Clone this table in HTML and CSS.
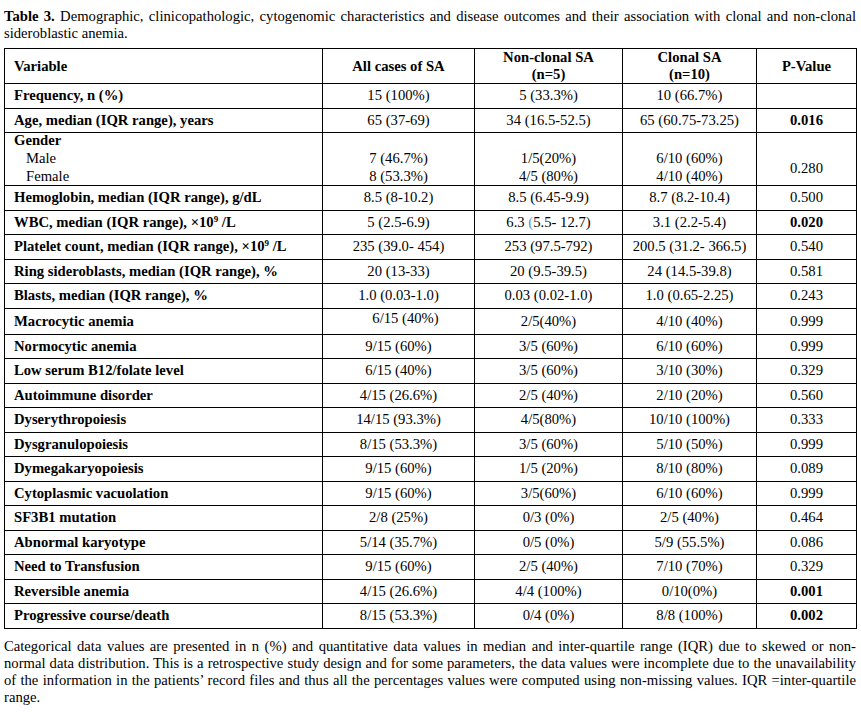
FILE: index.html
```html
<!DOCTYPE html>
<html>
<head>
<meta charset="utf-8">
<link rel="stylesheet" href="styles.css">
</head>
<body>
<div class="page">
  <p class="caption"><b>Table 3.</b> Demographic, clinicopathologic, cytogenomic characteristics and disease outcomes and their association with clonal and non-clonal sideroblastic anemia.</p>
  <table class="data">
    <colgroup>
      <col class="c1"><col class="c2"><col class="c3"><col class="c4"><col class="c5">
    </colgroup>
    <thead>
      <tr>
        <th class="left">Variable</th>
        <th>All cases of SA</th>
        <th>Non-clonal SA<br>(n=5)</th>
        <th>Clonal SA<br>(n=10)</th>
        <th>P-Value</th>
      </tr>
    </thead>
    <tbody>
      <tr><td class="var">Frequency, n (%)</td><td>15 (100%)</td><td>5 (33.3%)</td><td>10 (66.7%)</td><td></td></tr>
      <tr><td class="var">Age, median (IQR range), years</td><td>65 (37-69)</td><td>34 (16.5-52.5)</td><td>65 (60.75-73.25)</td><td class="sig">0.016</td></tr>
      <tr class="gender">
        <td class="var"><div class="stack">Gender<br><span class="sub">Male</span><br><span class="sub">Female</span></div></td>
        <td><div class="stack">&nbsp;<br>7 (46.7%)<br>8 (53.3%)</div></td>
        <td><div class="stack">&nbsp;<br>1/5(20%)<br>4/5 (80%)</div></td>
        <td><div class="stack">&nbsp;<br>6/10 (60%)<br>4/10 (40%)</div></td>
        <td class="low">0.280</td>
      </tr>
      <tr><td class="var">Hemoglobin, median (IQR range), g/dL</td><td>8.5 (8-10.2)</td><td>8.5 (6.45-9.9)</td><td>8.7 (8.2-10.4)</td><td>0.500</td></tr>
      <tr><td class="var">WBC, median (IQR range), ×10<sup>9</sup> /L</td><td>5 (2.5-6.9)</td><td>6.3 <span class="blue">(</span>5.5- 12.7)</td><td>3.1 (2.2-5.4)</td><td class="sig">0.020</td></tr>
      <tr><td class="var">Platelet count, median (IQR range), ×10<sup>9</sup> /L</td><td>235 (39.0- 454)</td><td>253 (97.5-792)</td><td>200.5 (31.2- 366.5)</td><td>0.540</td></tr>
      <tr><td class="var">Ring sideroblasts, median (IQR range), %</td><td>20 (13-33)</td><td>20 (9.5-39.5)</td><td>24 (14.5-39.8)</td><td>0.581</td></tr>
      <tr><td class="var">Blasts, median (IQR range), %</td><td>1.0 (0.03-1.0)</td><td>0.03 (0.02-1.0)</td><td>1.0 (0.65-2.25)</td><td>0.243</td></tr>
      <tr class="macro"><td class="var">Macrocytic anemia</td><td class="shift">6/15 (40%)</td><td>2/5(40%)</td><td>4/10 (40%)</td><td>0.999</td></tr>
      <tr><td class="var">Normocytic anemia</td><td>9/15 (60%)</td><td>3/5 (60%)</td><td>6/10 (60%)</td><td>0.999</td></tr>
      <tr><td class="var">Low serum B12/folate level</td><td>6/15 (40%)</td><td>3/5 (60%)</td><td>3/10 (30%)</td><td>0.329</td></tr>
      <tr><td class="var">Autoimmune disorder</td><td>4/15 (26.6%)</td><td>2/5 (40%)</td><td>2/10 (20%)</td><td>0.560</td></tr>
      <tr><td class="var">Dyserythropoiesis</td><td>14/15 (93.3%)</td><td>4/5(80%)</td><td>10/10 (100%)</td><td>0.333</td></tr>
      <tr><td class="var">Dysgranulopoiesis</td><td>8/15 (53.3%)</td><td>3/5 (60%)</td><td>5/10 (50%)</td><td>0.999</td></tr>
      <tr><td class="var">Dymegakaryopoiesis</td><td>9/15 (60%)</td><td>1/5 (20%)</td><td>8/10 (80%)</td><td>0.089</td></tr>
      <tr><td class="var">Cytoplasmic vacuolation</td><td>9/15 (60%)</td><td>3/5(60%)</td><td>6/10 (60%)</td><td>0.999</td></tr>
      <tr><td class="var">SF3B1 mutation</td><td>2/8 (25%)</td><td>0/3 (0%)</td><td>2/5 (40%)</td><td>0.464</td></tr>
      <tr><td class="var">Abnormal karyotype</td><td>5/14 (35.7%)</td><td>0/5 (0%)</td><td>5/9 (55.5%)</td><td>0.086</td></tr>
      <tr><td class="var">Need to Transfusion</td><td>9/15 (60%)</td><td>2/5 (40%)</td><td>7/10 (70%)</td><td>0.329</td></tr>
      <tr><td class="var">Reversible anemia</td><td>4/15 (26.6%)</td><td>4/4 (100%)</td><td>0/10(0%)</td><td class="sig">0.001</td></tr>
      <tr><td class="var">Progressive course/death</td><td>8/15 (53.3%)</td><td>0/4 (0%)</td><td>8/8 (100%)</td><td class="sig">0.002</td></tr>
    </tbody>
  </table>
  <p class="note">Categorical data values are presented in n (%) and quantitative data values in median and inter-quartile range (IQR) due to skewed or non-normal data distribution. This is a retrospective study design and for some parameters, the data values were incomplete due to the unavailability of the information in the patients’ record files and thus all the percentages values were computed using non-missing values. IQR =inter-quartile range.</p>
</div>
</body>
</html>
```
FILE: styles.css
```css
html, body {
  margin: 0;
  padding: 0;
  background: #ffffff;
}
.page {
  padding: 8px 5px 0 4px;
  font-family: "Liberation Serif", "Times New Roman", serif;
  font-size: 14.67px;
  line-height: 17px;
  color: #000;
}
.caption {
  margin: 0 0 6px 0;
  text-align: justify;
}
.data {
  border-collapse: collapse;
  width: 852px;
  table-layout: fixed;
}
.c1 { width: 318px; }
.c2 { width: 152px; }
.c3 { width: 148px; }
.c4 { width: 134px; }
.c5 { width: 100px; }
.data th, .data td {
  border: 1px solid #000;
  text-align: center;
  vertical-align: middle;
  padding: 3.25px 9px;
  white-space: nowrap;
}
.data th {
  padding-top: 0;
  padding-bottom: 0;
  font-weight: bold;
}
.data th.left, .data td.var {
  text-align: left;
}
.data td.var {
  font-weight: bold;
}
.data td.sig {
  font-weight: bold;
}
.sub {
  font-weight: normal;
  padding-left: 12px;
}
.gender td {
  line-height: 18px;
  padding-top: 0;
  padding-bottom: 0;
}
.stack {
  margin: -2px 0 0 0;
}
.gender td.low {
  padding-top: 18px;
}
.macro td {
  padding-top: 4px;
  padding-bottom: 4px;
}
.macro td.shift {
  padding-left: 23px;
  padding-bottom: 6px;
  padding-top: 0;
}
sup {
  font-size: 9px;
  line-height: 0;
  vertical-align: 5px;
}
.blue {
  color: #5a8fcf;
}
.note {
  margin: 9px 0 0 0;
  text-align: justify;
}
```
